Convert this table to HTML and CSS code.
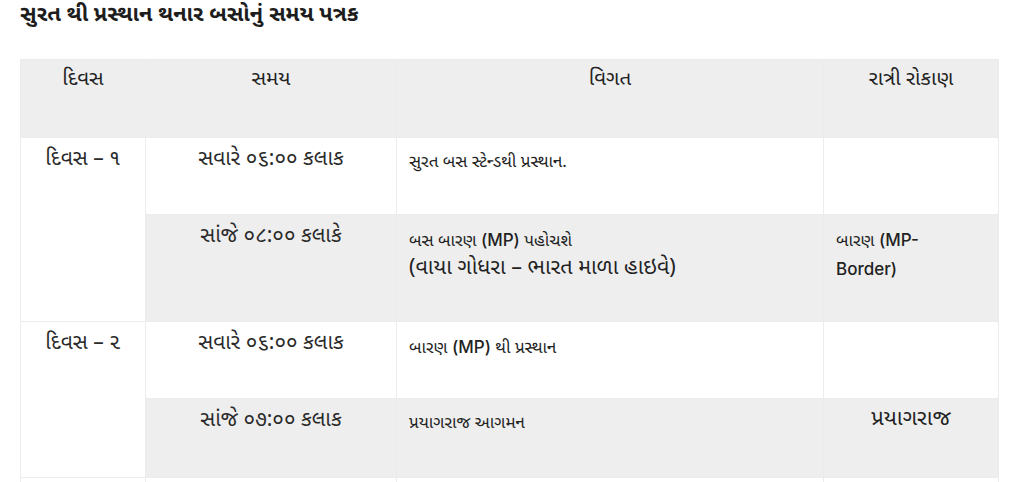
FILE: index.html
```html
<!DOCTYPE html>
<html lang="gu">
<head>
<meta charset="utf-8">
<link rel="stylesheet" href="styles.css">
</head>
<body>
<div class="page">
  <h2 class="title">સુરત થી પ્રસ્થાન થનાર બસોનું સમય પત્રક</h2>
  <table class="schedule">
    <colgroup>
      <col class="c-day"><col class="c-time"><col class="c-detail"><col class="c-stay">
    </colgroup>
    <thead>
      <tr class="r-head">
        <th>દિવસ</th>
        <th>સમય</th>
        <th>વિગત</th>
        <th>રાત્રી રોકાણ</th>
      </tr>
    </thead>
    <tbody>
      <tr class="r-short white">
        <td class="day" rowspan="2">દિવસ – ૧</td>
        <td class="time">સવારે ૦૬:૦૦ કલાક</td>
        <td class="detail">સુરત બસ સ્ટેન્ડથી પ્રસ્થાન.</td>
        <td class="stay"></td>
      </tr>
      <tr class="r-tall gray">
        <td class="time">સાંજે ૦૮:૦૦ કલાકે</td>
        <td class="detail">બસ બારણ <span class="latin">(MP)</span> પહોચશે<br><span class="big">(વાયા ગોધરા – ભારત માળા હાઇવે)</span></td>
        <td class="stay">બારણ <span class="latin">(MP-</span><span class="latin">Border)</span></td>
      </tr>
      <tr class="r-short white">
        <td class="day" rowspan="2">દિવસ – ૨</td>
        <td class="time">સવારે ૦૬:૦૦ કલાક</td>
        <td class="detail">બારણ <span class="latin">(MP)</span> થી પ્રસ્થાન</td>
        <td class="stay"></td>
      </tr>
      <tr class="r-last gray">
        <td class="time">સાંજે ૦૭:૦૦ કલાક</td>
        <td class="detail">પ્રયાગરાજ આગમન</td>
        <td class="stay center">પ્રયાગરાજ</td>
      </tr>
      <tr class="r-more white">
        <td></td><td></td><td></td><td></td>
      </tr>
    </tbody>
  </table>
</div>
</body>
</html>
```

FILE: styles.css
```css
html, body {
  margin: 0;
  padding: 0;
  background: #ffffff;
}
body {
  font-family: "Noto Sans Gujarati", "Lohit Gujarati", "Noto Sans", sans-serif;
  color: #222222;
}
.page {
  padding: 0 26px 0 20px;
}
.title {
  margin: 0;
  padding-top: 1px;
  height: 58px;
  font-size: 22px;
  font-weight: 700;
  line-height: 30px;
  color: #1d1d1d;
}
.schedule {
  width: 978px;
  border-collapse: collapse;
  table-layout: fixed;
}
.c-day { width: 125px; }
.c-time { width: 251px; }
.c-detail { width: 427px; }
.c-stay { width: 175px; }

.schedule th,
.schedule td {
  border: 1px solid #ececec;
  vertical-align: top;
  padding: 0 12px;
}
.r-head { height: 78px; }
.r-short { height: 77px; }
.r-tall { height: 107px; }
.r-last { height: 79px; }
.r-more { height: 10px; }

.r-head th {
  background: #eeeeee;
  font-weight: 400;
  font-size: 20.5px;
  line-height: 28px;
  padding-top: 6px;
  color: #222;
  text-align: center;
}
.white td { background: #ffffff; }
.gray td { background: #eeeeee; }
.schedule td.day { background: #ffffff; }

.schedule td.day,
.schedule td.time {
  text-align: center;
  font-size: 21px;
  line-height: 28px;
  padding-top: 8px;
  color: #2a2a2a;
}
.schedule td.detail,
.schedule td.stay {
  font-size: 17px;
  line-height: 27px;
  padding-top: 12px;
}
.schedule td.stay {
  padding-right: 30px;
}
.schedule td.stay.center {
  text-align: center;
  font-size: 22px;
  padding-top: 7px;
  padding-right: 12px;
}
.big {
  font-size: 21.5px;
}
.latin {
  font-family: "Inter", "Open Sans", sans-serif;
  font-weight: 500;
  font-size: 17px;
}
```
